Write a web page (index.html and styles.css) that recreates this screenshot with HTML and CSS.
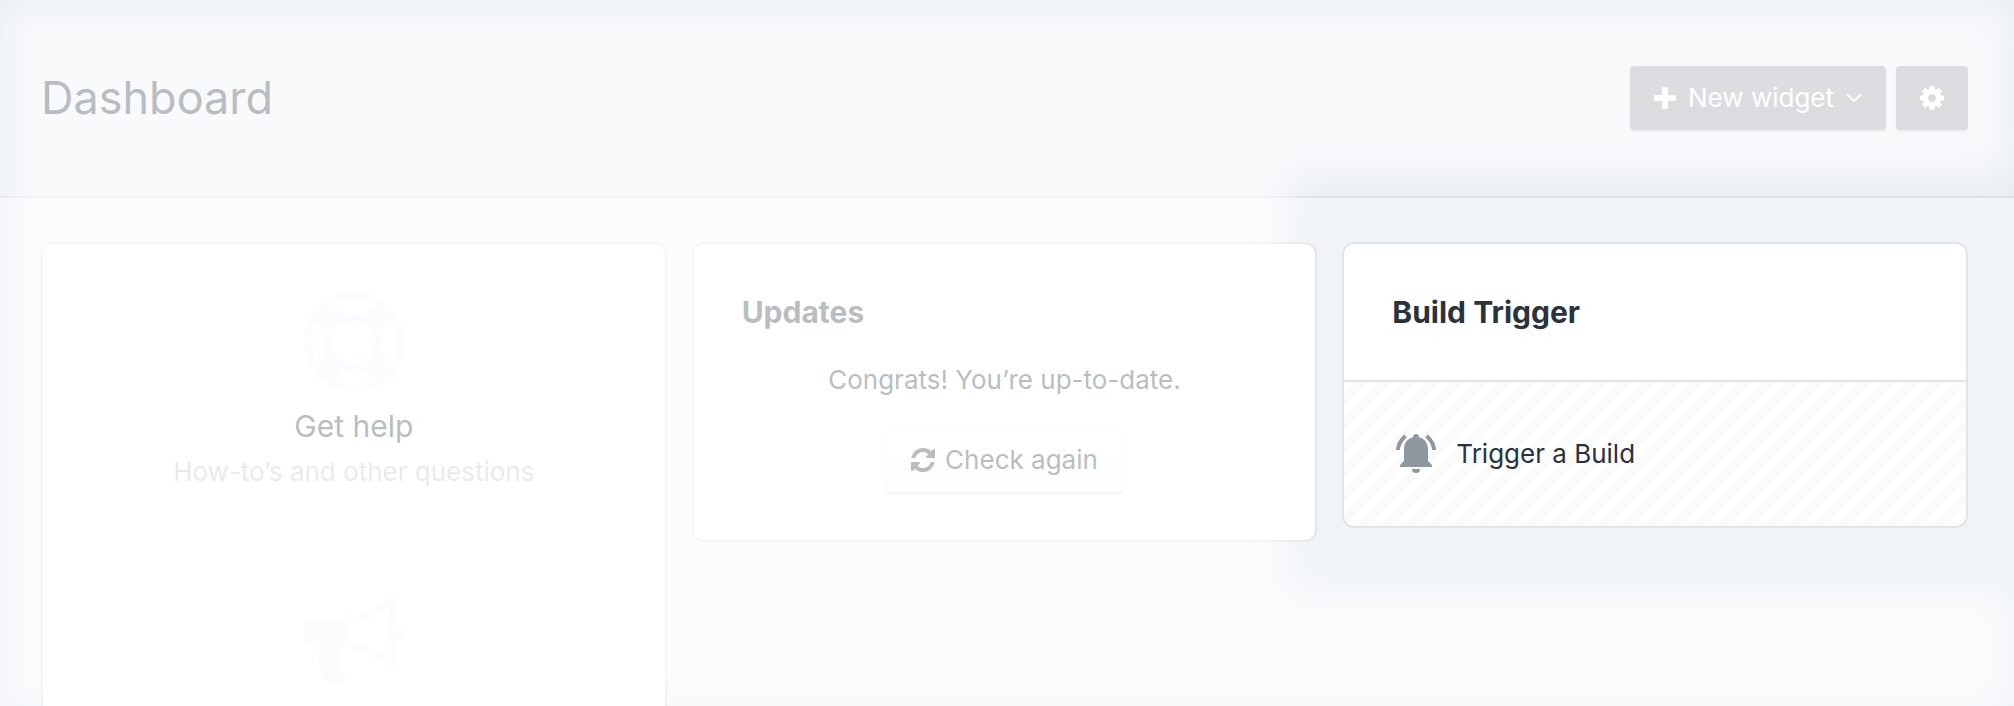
FILE: index.html
```html
<!DOCTYPE html>
<html lang="en">
<head>
<meta charset="utf-8">
<title>Dashboard</title>
<link rel="stylesheet" href="styles.css">
</head>
<body>
<div class="app">
  <header class="header">
    <h1 class="page-title">Dashboard</h1>
    <div class="actions">
      <button type="button" class="btn btn-primary">
        <svg class="icon-plus" viewBox="0 0 22 22" aria-hidden="true"><path fill="currentColor" d="M9.500 0h3a1.500 1.500 0 0 1 1.500 1.500V8h6.500A1.500 1.500 0 0 1 22 9.500v3a1.500 1.500 0 0 1-1.500 1.500H14v6.500a1.500 1.500 0 0 1-1.500 1.500h-3A1.500 1.500 0 0 1 8 20.500V14H1.500A1.500 1.500 0 0 1 0 12.500v-3A1.500 1.500 0 0 1 1.500 8H8V1.500A1.500 1.500 0 0 1 9.500 0z"/></svg>
        <span>New widget</span>
        <svg class="icon-chevron" viewBox="0 0 16 10" aria-hidden="true"><path fill="none" stroke="currentColor" stroke-width="2" d="M1 1l7 7 7-7"/></svg>
      </button>
      <button type="button" class="btn btn-primary btn-icon" aria-label="Settings">
        <svg class="icon-gear" viewBox="0 0 1536 1536" aria-hidden="true"><path fill="currentColor" d="M1024 768q0-106-75-181t-181-75-181 75-75 181 75 181 181 75 181-75 75-181zm512-109v222q0 12-8 23t-20 13l-185 28q-19 54-39 91 35 50 107 138 10 12 10 25t-9 23q-27 37-99 108t-94 71q-12 0-26-9l-138-108q-44 23-91 38-16 136-29 186-7 28-36 28H657q-14 0-24.500-8.500T621 1506l-28-184q-49-16-90-37l-141 107q-10 9-25 9-14 0-25-11-126-114-165-168-7-10-7-23 0-12 8-23 15-21 51-66.500t54-70.500q-27-50-41-99L29 913q-13-2-21-12.500T0 877V655q0-12 8-23t19-13l186-28q14-46 39-92-40-57-107-138-10-12-10-24 0-10 9-23 26-36 98.500-107.500T337 135q13 0 26 10l138 107q44-23 91-38 16-136 29-186 7-28 36-28h222q14 0 24.500 8.500T915 30l28 184q49 16 90 37l142-107q9-9 24-9 13 0 25 10 129 119 165 170 7 8 7 22 0 12-8 23-15 21-51 66.500t-54 70.500q26 50 41 98l183 28q13 2 21 12.500t8 23.500z"/></svg>
      </button>
    </div>
  </header>

  <main class="widgets">
    <section class="card card-links">
      <div class="link-block">
        <svg class="icon-large" viewBox="0 0 1792 1792" aria-hidden="true"><path fill="currentColor" d="M896 0q182 0 348 71t286 191 191 286 71 348-71 348-191 286-286 191-348 71-348-71-286-191-191-286T0 896t71-348 191-286T548 71 896 0zm0 128q-190 0-361 90l194 194q82-28 167-28t167 28l194-194q-171-90-361-90zM218 1257l194-194q-28-82-28-167t28-167L218 535q-90 171-90 361t90 361zm678 407q190 0 361-90l-194-194q-82 28-167 28t-167-28l-194 194q171 90 361 90zm0-384q159 0 271.500-112.500T1280 896t-112.500-271.500T896 512 624.500 624.500 512 896t112.500 271.500T896 1280zm484-217l194 194q90-171 90-361t-90-361l-194 194q28 82 28 167t-28 167z"/></svg>
        <h2 class="link-title">Get help</h2>
        <p class="link-text">How-to’s and other questions</p>
      </div>
      <div class="link-block">
        <svg class="icon-large" viewBox="0 0 1792 1792" aria-hidden="true"><path fill="currentColor" d="M1664 640q53 0 90.500 37.500T1792 768t-37.500 90.500T1664 896v384q0 52-38 90t-90 38q-417-347-812-380-58 19-91 66t-31 100.500 40 92.500q-20 33-23 65.500t6 58 33.500 55 48 50T768 1561q-29 58-111.500 83t-168.500 11.500T356 1600q-7-23-29.500-87.500t-32-94.500-23-89-15-101 3.500-98.500 22-110.500H160q-66 0-113-47T0 864V672q0-66 47-113t113-47h480q435 0 896-384 52 0 90 38t38 90v384zm-128 604V290Q1142 592 768 633v270q377 43 768 341z"/></svg>
      </div>
    </section>

    <section class="card card-updates">
      <h2 class="card-title">Updates</h2>
      <p class="status">Congrats! You’re up-to-date.</p>
      <button type="button" class="btn btn-light">
        <svg class="icon-refresh" viewBox="0 0 1536 1536" aria-hidden="true"><path fill="currentColor" d="M1511 928q0 5-1 7-64 268-268 434.500T764 1536q-146 0-282.500-55T238 1324l-129 129q-19 19-45 19t-45-19-19-45V960q0-26 19-45t45-19h448q26 0 45 19t19 45-19 45l-137 137q71 66 161 102t187 36q134 0 250-65t186-179q11-17 53-117 8-23 30-23h192q13 0 22.500 9.500t9.500 22.500zm25-800v448q0 26-19 45t-45 19h-448q-26 0-45-19t-19-45 19-45l138-138Q969 256 768 256q-134 0-250 65T332 500q-11 17-53 117-8 23-30 23H50q-13 0-22.500-9.500T18 608v-7q65-268 270-434.500T768 0q146 0 284 55.500T1297 212l130-129q19-19 45-19t45 19 19 45z"/></svg>
        <span>Check again</span>
      </button>
    </section>

    <section class="card card-build">
      <h2 class="card-title">Build Trigger</h2>
      <a class="trigger" href="#build">
        <svg class="icon-bell" viewBox="0 0 40 40" aria-hidden="true"><path fill="currentColor" d="M20 0c2 0 3 1.400 3 3.300C28.600 4.600 32 9 32 15v12l4 4v2H4v-2l4-4V15C8 9 11.400 4.600 17 3.300 17 1.400 18 0 20 0zM16 35h8a4 4 0 0 1-8 0z"/><path fill="none" stroke="currentColor" stroke-width="4" d="M9.500 2C4.800 6 2.200 10.500 2 16M30.500 2c4.700 4 7.300 8.500 7.500 14"/></svg>
        <span>Trigger a Build</span>
      </a>
    </section>
  </main>

  <div class="veil"><div class="veil-shape"></div></div>
</div>
</body>
</html>
```

FILE: styles.css
```css
* { box-sizing: border-box; }

body {
  margin: 0;
  font-family: Inter, "Liberation Sans", sans-serif;
  font-size: 26px;
  line-height: 40px;
  color: #29323d;
}

h1, h2, p { margin: 0; }

.app {
  position: relative;
  height: 100vh;
  overflow: hidden;
  background: #f0f4f8;
}

.header {
  display: flex;
  align-items: center;
  justify-content: space-between;
  padding: 66px 46px 66px 41px;
  background: #e9eef4;
  border-bottom: 2px solid #dadde3;
}

.page-title {
  font-size: 45px;
  line-height: 64px;
  font-weight: 400;
}

.actions { display: flex; gap: 10px; }

.btn {
  display: inline-flex;
  align-items: center;
  justify-content: center;
  height: 64px;
  padding: 0 24px;
  gap: 10px;
  border: 0;
  border-radius: 4px;
  font: inherit;
}

.btn-primary {
  gap: 12px;
  color: #fff;
  background: linear-gradient(#9498a0, #8f929b);
  box-shadow: 0 2px 2px rgba(41, 50, 61, 0.2);
}

.btn-icon { width: 72px; padding: 0; }

.btn-light {
  color: inherit;
  background: linear-gradient(#fff, #f9f9fa);
  border: 1px solid #f6f6f7;
  box-shadow: 0 2px 2px rgba(41, 50, 61, 0.16);
}

.icon-plus { width: 22px; height: 22px; }
.icon-chevron { width: 16px; height: 10px; }
.icon-gear { width: 24px; height: 24px; }
.icon-refresh { width: 24px; height: 24px; }
.icon-bell { width: 40px; height: 40px; color: #9197a1; }
.icon-large { width: 100px; height: 100px; color: #f0f4f8; }

.widgets {
  display: grid;
  grid-template-columns: repeat(3, 1fr);
  align-items: start;
  gap: 25px;
  padding: 44px 46px 44px 41px;
}

.card {
  overflow: hidden;
  background: #fff;
  border: 2px solid #e3e4e9;
  border-radius: 12px;
}

.card-title {
  font-size: 30px;
  line-height: 40px;
  font-weight: 700;
}

.card-links {
  display: flex;
  flex-direction: column;
  gap: 98px;
  padding: 48px;
}

.link-block {
  display: flex;
  flex-direction: column;
  align-items: center;
}

.link-title {
  margin-top: 14px;
  font-size: 30px;
  line-height: 40px;
  font-weight: 400;
}

.link-text { margin-top: 6px; color: #bdbfc5; }

.card-updates {
  display: flex;
  flex-direction: column;
  align-items: center;
  gap: 28px;
  padding: 48px;
}

.card-updates .card-title { align-self: flex-start; }

.card-build .card-title { padding: 48px; }

.trigger {
  display: flex;
  align-items: center;
  gap: 20px;
  padding: 52px;
  color: inherit;
  text-decoration: none;
  border-top: 2px solid #e3e4e9;
  background: linear-gradient(135deg, #fff 25%, #fafafa 25% 50%, #fff 50% 75%, #fafafa 75%) 0 0 / 24px 24px;
}

/* Soft white veil with an opening around the build card. */
.veil {
  position: absolute;
  inset: 3px 3px -8px;
  pointer-events: none;
  filter: blur(20px);
}

.veil-shape {
  height: 100%;
  background: rgba(255, 255, 255, 0.68);
  clip-path: polygon(0 0, 100% 0, 100% 174px, 1287px 174px, 1287px 587px, 100% 587px, 100% 100%, 0 100%);
}
```
